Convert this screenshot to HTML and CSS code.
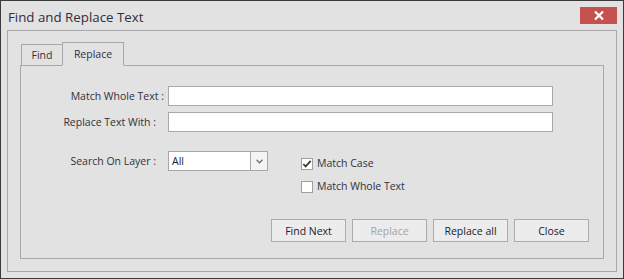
FILE: index.html
```html
<!DOCTYPE html>
<html>
<head>
<meta charset="utf-8">
<link rel="stylesheet" href="styles.css">
</head>
<body>
<div class="window">
  <div class="titlebar">
    <span class="title">Find and Replace Text</span>
    <button class="close-x" aria-label="Close">
      <svg width="10" height="9" viewBox="0 0 10 9"><path d="M1 0.5 L9 8.5 M9 0.5 L1 8.5" stroke="#fff" stroke-width="2.2" fill="none"/></svg>
    </button>
  </div>
  <div class="group">
    <div class="tabs">
      <div class="tab tab-find">Find</div>
      <div class="tab tab-replace active">Replace</div>
    </div>
    <div class="panel">
      <div class="row">
        <label class="lbl lbl-match">Match Whole Text :</label>
        <div class="input"></div>
      </div>
      <div class="row row2">
        <label class="lbl">Replace Text With :</label>
        <div class="input"></div>
      </div>
      <div class="row row3">
        <label class="lbl lbl-layer">Search On Layer :</label>
        <div class="combo">
          <span class="combo-val">All</span>
          <span class="combo-btn">
            <svg width="7" height="5" viewBox="0 0 7 5"><path d="M0.5 0.8 L3.5 3.8 L6.5 0.8" stroke="#707070" stroke-width="1.3" fill="none"/></svg>
          </span>
        </div>
        <div class="checks">
          <div class="check">
            <span class="box"><svg width="11" height="10" viewBox="0 0 11 10"><path d="M1.5 5 L4 7.8 L9.5 1.5" stroke="#333" stroke-width="1.9" fill="none"/></svg></span>
            <span>Match Case</span>
          </div>
          <div class="check">
            <span class="box"></span>
            <span>Match Whole Text</span>
          </div>
        </div>
      </div>
      <div class="buttons">
        <button class="btn">Find Next</button>
        <button class="btn disabled">Replace</button>
        <button class="btn">Replace all</button>
        <button class="btn">Close</button>
      </div>
    </div>
  </div>
</div>
</body>
</html>
```
FILE: styles.css
```css
* { box-sizing: border-box; }
html, body { margin: 0; padding: 0; }
body {
  font-family: "Open Sans", "Noto Sans", sans-serif;
  font-size: 10.5px;
  color: #303040;
  background: #e2e2e2;
}
.window {
  width: 624px;
  height: 279px;
  border: 1px solid #3a3a3a;
  background: #e2e2e2;
  display: flex;
  flex-direction: column;
}
.titlebar {
  height: 29px;
  display: flex;
  align-items: flex-start;
  justify-content: space-between;
  padding: 0 6px 0 7px;
}
.title {
  font-size: 13.3px;
  line-height: 16px;
  margin-top: 8px;
  color: #2e2e3e;
}
.close-x {
  margin-top: 6px;
  width: 37px;
  height: 17px;
  border: 0;
  padding: 0;
  background: #c75050;
  display: flex;
  align-items: center;
  justify-content: center;
}
.group {
  margin: 0 6px;
  height: 242px;
  border: 1px solid #a8a8a8;
  padding: 12px 12px 12px 12px;
  display: flex;
  flex-direction: column;
}
.tabs {
  display: flex;
  align-items: flex-end;
  height: 23px;
  position: relative;
  z-index: 1;
  margin-bottom: -1px;
  padding-left: 1px;
}
.tab {
  height: 22px;
  border: 1px solid #a8a8a8;
  line-height: 20px;
  text-align: center;
  background: #e2e2e2;
  color: #303040;
}
.tab-find { width: 42px; }
.tab-replace { width: 62px; }
.tab.active {
  height: 24px;
  margin-left: -1px;
  border-bottom-color: #e2e2e2;
  line-height: 22px;
}
.panel {
  flex: 1;
  border: 1px solid #a8a8a8;
  padding: 20px 14px 16px 0;
  display: flex;
  flex-direction: column;
}
.row {
  display: flex;
  align-items: center;
}
.row2 { margin-top: 6px; }
.row3 { margin-top: 19px; align-items: flex-start; }
.lbl {
  width: 147px;
  text-align: right;
  padding-right: 12px;
  line-height: 20px;
}
.lbl-match { padding-right: 4px; }
.input {
  flex: 1;
  height: 20px;
  background: #fff;
  border: 1px solid #a8a8a8;
  margin-right: 36px;
}
.combo {
  width: 100px;
  height: 20px;
  background: #fff;
  border: 1px solid #a8a8a8;
  display: flex;
}
.combo-val {
  flex: 1;
  padding-left: 3px;
  line-height: 18px;
  color: #202030;
}
.combo-btn {
  width: 17px;
  border-left: 1px solid #a8a8a8;
  background: #f4f4f4;
  display: flex;
  align-items: center;
  justify-content: center;
}
.checks {
  margin-left: 33px;
  margin-top: 6px;
  display: flex;
  flex-direction: column;
  gap: 10px;
}
.check {
  display: flex;
  align-items: center;
  gap: 4px;
  height: 13px;
  line-height: 13px;
}
.box {
  width: 12px;
  height: 12px;
  background: #fff;
  border: 1px solid #a0a0a0;
  display: flex;
  align-items: center;
  justify-content: center;
}
.buttons {
  margin-top: auto;
  display: flex;
  justify-content: flex-end;
  gap: 6px;
}
.btn {
  width: 75px;
  height: 23px;
  border: 1px solid #ababab;
  background: #ececec;
  font-family: inherit;
  font-size: 10.5px;
  color: #202030;
  padding: 0;
}
.btn.disabled { color: #a4a4a4; }
```
